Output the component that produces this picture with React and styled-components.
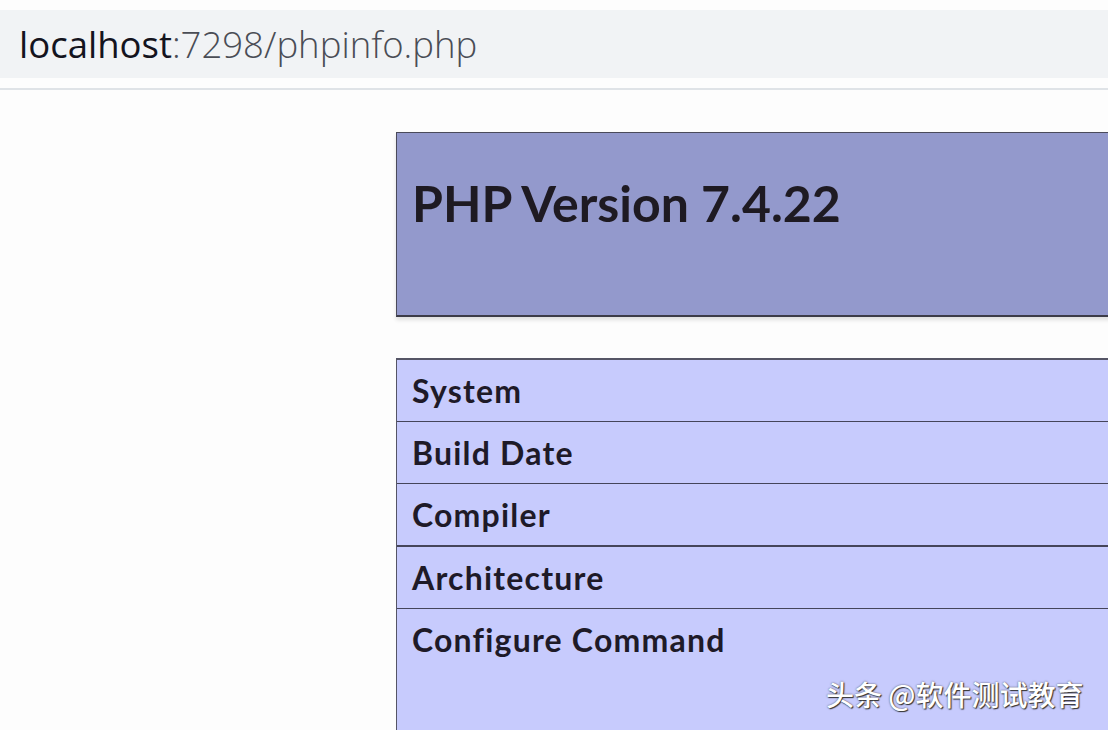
import styled, { createGlobalStyle } from "styled-components";

const GlobalStyle = createGlobalStyle`
  html, body {
    margin: 0;
    padding: 0;
    background: #fdfdfd;
    overflow: hidden;
  }
  body {
    font-family: "Lato", "Open Sans", sans-serif;
  }
`;

const Page = styled.div`
  width: 1108px;
  height: 730px;
  overflow: hidden;
  display: flex;
  flex-direction: column;
`;

const Chrome = styled.div`
  padding-top: 10px;
  padding-bottom: 10px;
  border-bottom: 2px solid #dfe3e7;
  background: #fdfdfd;
`;

const AddressBar = styled.div`
  height: 68px;
  background: #f1f3f5;
  display: flex;
  align-items: center;
  padding-left: 19px;
  font-family: "Open Sans", sans-serif;
  font-weight: 300;
  font-size: 36.5px;
  color: #4a4d55;
`;

const Host = styled.span`
  color: #14141e;
  font-weight: 400;
`;

const Content = styled.div`
  flex: 1;
  padding-top: 42px;
  padding-left: 396px;
  display: flex;
  flex-direction: column;
  gap: 41px;
`;

const Header = styled.div`
  height: 185px;
  width: 740px;
  background: #9399cc;
  border: 1px solid #4a4a5a;
  border-bottom: 2px solid #3c3c48;
  box-shadow: 0 3px 4px rgba(0, 0, 0, 0.12);
  padding: 40px 0 0 15px;
  box-sizing: border-box;
`;

const Title = styled.h1`
  margin: 0;
  font-size: 50px;
  font-weight: 700;
  color: #1e1a22;
`;

const Table = styled.div`
  width: 740px;
  border-top: 2px solid #555566;
  border-left: 1px solid #555566;
  display: flex;
  flex-direction: column;
`;

const Row = styled.div`
  height: ${(p) => p.h}px;
  background: #c7cbfd;
  border-bottom: ${(p) => p.b}px solid #45455a;
  padding: 11px 0 0 15px;
  box-sizing: border-box;
  font-size: 32px;
  font-weight: 700;
  letter-spacing: 1.2px;
  color: #1e1a28;
`;

const Watermark = styled.div`
  position: absolute;
  left: 826px;
  top: 674px;
  font-family: "Noto Sans CJK SC", sans-serif;
  font-size: 28px;
  font-weight: 500;
  color: #ffffff;
  text-shadow: 1px 1px 1px #333, 0 0 2px rgba(0, 0, 0, 0.6);
`;

const rows = [
  { label: "System", h: 62, b: 1 },
  { label: "Build Date", h: 62, b: 1 },
  { label: "Compiler", h: 63, b: 2 },
  { label: "Architecture", h: 62, b: 1 },
  { label: "Configure Command", h: 140, b: 0 },
];

export default function App() {
  return (
    <Page>
      <GlobalStyle />
      <Chrome>
        <AddressBar>
          <Host>localhost</Host>:7298/phpinfo.php
        </AddressBar>
      </Chrome>
      <Content>
        <Header>
          <Title>PHP Version 7.4.22</Title>
        </Header>
        <Table>
          {rows.map((r) => (
            <Row key={r.label} h={r.h} b={r.b}>
              {r.label}
            </Row>
          ))}
        </Table>
      </Content>
      <Watermark>头条 @软件测试教育</Watermark>
    </Page>
  );
}
